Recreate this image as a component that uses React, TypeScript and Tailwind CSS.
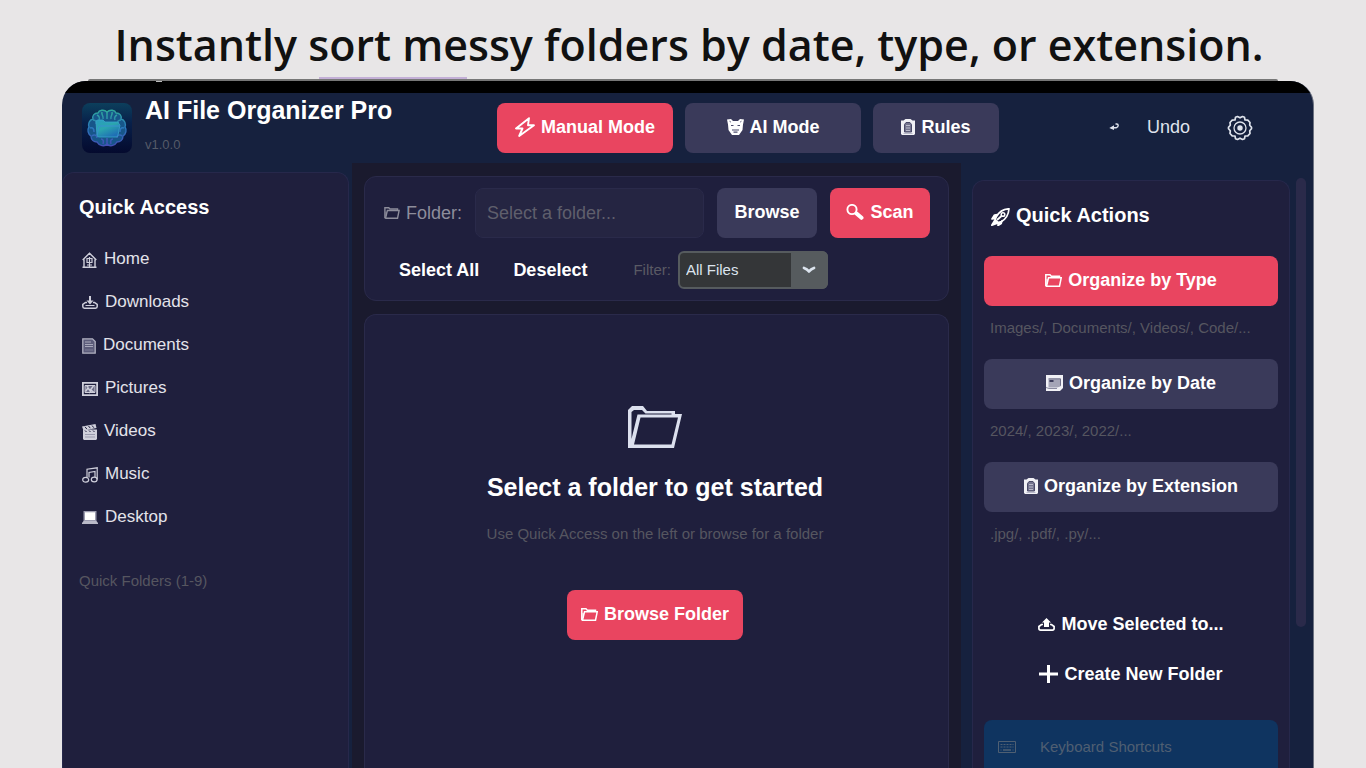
import React from "react";

type IconProps = { className?: string };

const svgBase = {
  fill: "none",
  stroke: "currentColor",
  "aria-hidden": true,
} as const;

const LogoIcon = () => (
  <svg viewBox="0 0 50 50" className="size-[50px] shrink-0" aria-hidden="true">
    <defs>
      <linearGradient id="logoBg" x1="0" y1="0" x2="0" y2="1">
        <stop offset="0" stopColor="#0c3f5c" />
        <stop offset="0.4" stopColor="#08204a" />
        <stop offset="1" stopColor="#040a2e" />
      </linearGradient>
      <linearGradient id="logoBrain" x1="0" y1="0" x2="0" y2="1">
        <stop offset="0" stopColor="#2fa79c" />
        <stop offset="0.5" stopColor="#2b78bd" />
        <stop offset="1" stopColor="#4350b4" />
      </linearGradient>
      <linearGradient id="logoFolder" x1="0" y1="0" x2="0.6" y2="1">
        <stop offset="0" stopColor="#2a9cc0" />
        <stop offset="0.5" stopColor="#2ba6ae" />
        <stop offset="1" stopColor="#1f6fb5" />
      </linearGradient>
    </defs>
    <rect width="50" height="50" rx="8" fill="url(#logoBg)" />
    <path
      d="M25 9c-3-3-8-2-9 1-4 0-6 3-5 6-4 1-5 5-4 8-2 3-1 7 2 9 0 4 3 6 6 6 2 4 8 5 10 2 2 3 8 2 10-2 3 0 6-2 6-6 3-2 4-6 2-9 1-3 0-7-4-8 1-3-1-6-5-6-1-3-6-4-9-1z"
      fill="#17568a"
      stroke="url(#logoBrain)"
      strokeWidth="1.4"
    />
    <path
      d="M25 9v7M20 9c-1 3 2 4 1 7M15 12c2 1 3 3 2 5M30 9c1 3-2 4-1 7M35 12c-2 1-3 3-2 5M11 17c3 0 4 2 3 4M39 17c-3 0-4 2-3 4M8 25c3-1 4 1 4 4M42 25c-3-1-4 1-4 4M10 33c2-2 5-1 5 2M40 33c-2-2-5-1-5 2M25 35v6M19 36c2 0 3 2 2 5M31 36c-2 0-3 2-2 5"
      fill="none"
      stroke="url(#logoBrain)"
      strokeWidth="1.5"
    />
    <path
      d="M14 19q0-2 2-2h5l2 2h12q2 0 2 2l1 1-2 10q0 2-2 2H17q-2 0-2-2z"
      fill="url(#logoFolder)"
      stroke="#39a6c9"
      strokeWidth="0.8"
    />
    <path d="M15 32l2-8q.3-1 1.300-1H38" fill="none" stroke="#3a8fd0" strokeWidth="1" />
  </svg>
);

const BoltIcon = () => (
  <svg viewBox="0 0 20 20" className="size-5" {...svgBase} strokeWidth="1.9" strokeLinejoin="round">
    <path d="M14 1.200 1 11.500h6.500L4.200 19 19 8.200h-6z" />
  </svg>
);

const RobotIcon = () => (
  <svg viewBox="0 0 17 16" className="h-4 w-[17px]" fill="currentColor" aria-hidden="true">
    <path d="M0 .5 4 0l2 2h5l2-2 4 .5-1 5-.5 5.500L12 16H5l-3.500-5L1 5.500z" />
    <path d="M4 6.500h2.500M13 6.500h-2.500M5 11h7M6.500 13.200h4" stroke="#4b4b6c" strokeWidth="1.200" fill="none" />
    <path d="M2.500 2.200 4 3.200M14.500 2.200 13 3.200" stroke="#6d6d88" strokeWidth="1" />
  </svg>
);

const ClipboardIcon = () => (
  <svg viewBox="0 0 14 16" className="h-4 w-3.5" aria-hidden="true">
    <path d="M0 1.500h2.500L4.500 0h5l2 1.500H14V15l-1 1H1l-1-1z" fill="#f1f1f6" />
    <path d="M3.500 13V5.500L5 3.500h4l1.500 2V13z" fill="#74748f" stroke="#4a4a69" strokeWidth="1" />
    <path d="M5 6.500h4M5 9h4M5 11.500h4" stroke="#b9b9ca" strokeWidth="1" />
    <path d="M2.500 14.500h9" stroke="#b9b9ca" strokeWidth="1" />
  </svg>
);

const UndoIcon = () => (
  <svg viewBox="0 0 10 8" className="h-2 w-2.5" {...svgBase} strokeWidth="1.4">
    <path d="M6.500 1h1.200Q9.200 1 9.200 2.500T7 4.800H2" />
    <path d="M5 2.200.3 5l4.700 2z" fill="currentColor" stroke="none" />
  </svg>
);

const GearIcon = () => (
  <svg viewBox="0 0 26 26" className="size-[26px]" {...svgBase} strokeWidth="1.700" strokeLinejoin="round">
    <path d="M10.500 1.500 13 2.800l2.500-1.300 2 .8.500 2.700 2.800.2L23 7.500l-.3 2.700 1.800 2v1.600l-1.800 2 .3 2.700-2.200 2.300-2.800.2-.5 2.700-2 .8-2.500-1.300-2.500 1.300-2-.8L8 21l-2.800-.2L3 18.500l.3-2.700-1.800-2v-1.600l1.800-2L3 7.500 5.200 5.200 8 5l.5-2.700z" />
    <circle cx="13" cy="13" r="6" strokeWidth="1.300" />
    <circle cx="13" cy="13" r="2.700" fill="currentColor" stroke="none" />
  </svg>
);

const HomeIcon = () => (
  <svg viewBox="0 0 15 16" className="h-4 w-[15px]" {...svgBase} strokeWidth="1.400">
    <path d="M.7 8 7.500 1.200 14.300 8M2 7.500v7.700M13 7.500v7.700M.5 15.200h14" />
    <path d="M5 6.500h5v4H5zM7.500 5v10M5 13h5" strokeWidth="1.200" />
  </svg>
);

const DownloadIcon = () => (
  <svg viewBox="0 0 16 13" className="h-[13px] w-4" {...svgBase} strokeWidth="1.500">
    <path d="M5 6.500H3.500L.8 8.500v2q0 1.700 1.700 1.700h11q1.700 0 1.700-1.700v-2l-2.700-2H11" />
    <path d="M3.500 9.500h9" strokeWidth="1" />
    <path d="M7 0h2v4.500h2.500L8 8.500 4.500 4.500H7z" fill="currentColor" stroke="none" />
  </svg>
);

const UploadIcon = () => (
  <svg viewBox="0 0 17 13" className="h-[13px] w-[17px]" {...svgBase} strokeWidth="1.700">
    <path d="M5 6.500H3.500L.9 8.500v2q0 1.600 1.700 1.600h11.800q1.700 0 1.700-1.600v-2l-2.600-2H12" />
    <path d="M8.500 0 13 4.500h-2V9H6V4.500H4z" fill="currentColor" stroke="none" />
  </svg>
);

const DocumentIcon = () => (
  <svg viewBox="0 0 14 16" className="h-4 w-3.5" {...svgBase} strokeWidth="1.300">
    <path d="M.8.8h9.700l2.700 2.700v11.700H.8z" fill="#5c5c7a" stroke="#b0b0c0" />
    <path d="M3 4h6M3 6.500h8M3 8.500h8" stroke="#a7a7ba" strokeWidth="1.200" />
    <path d="M3 12h8" stroke="#7d7d96" strokeWidth="1" />
  </svg>
);

const PictureIcon = () => (
  <svg viewBox="0 0 16 14" className="h-3.5 w-4" {...svgBase} strokeWidth="1.800">
    <path d="M.9.900h14.200v12.200H.9z" />
    <path d="M3 3.500h10v7H3z" strokeWidth="1" fill="#6a6a86" />
    <path d="M3.500 9.500 6 6l2 2.500L11.500 4M7 11l2.500-2.500L12 10.500M4.500 4.500h2" strokeWidth="1.400" />
  </svg>
);

const VideoIcon = () => (
  <svg viewBox="0 0 15 16" className="h-4 w-[15px]" fill="currentColor" aria-hidden="true">
    <path d="M0 2.500 13.500 0l1 4L1.500 6.500z" />
    <path d="M1 5.500h14V15l-1 1H2l-1-1z" />
    <path d="M3 2.800 4.800 5M6.500 2l1.800 2.200M10 1.500l1.800 2.200M3 6.500l1.500 1.500M7 6.500 8.500 8M11 6.500 12.500 8" stroke="#1f1f3d" strokeWidth="1" />
    <path d="M3 10.500h10M3 13h10" stroke="#9a9aae" strokeWidth="1" />
  </svg>
);

const MusicIcon = () => (
  <svg viewBox="0 0 16 16" className="size-4" {...svgBase} strokeWidth="1.200">
    <path d="M5 11V2.200L15.200.800v11.700M7 10.500V5.500l6-1V10" />
    <ellipse cx="3.700" cy="12.800" rx="3" ry="2.400" />
    <ellipse cx="12.200" cy="12.500" rx="2.900" ry="2.400" />
  </svg>
);

const LaptopIcon = () => (
  <svg viewBox="0 0 16 13" className="h-[13px] w-4" aria-hidden="true">
    <path d="M1.500 0h13v10h-13z" fill="#9c9cb0" />
    <path d="M3 1.300h10v7.700H3z" fill="#fff" />
    <path d="M1.500 10h13L16 12v1H0v-1z" fill="#b9b9c8" />
  </svg>
);

const FolderIcon = ({ className }: IconProps) => (
  <svg viewBox="0 0 54 42" className={className} fill="currentColor" fillRule="evenodd" aria-hidden="true">
    <path d="M0 42V4l4-4h11l4 5h28v3h7l-8 34zM3.500 33 9.500 8.500H43.500V7.500H17.500L14 4H6L3.500 6zM6 38.500H43.500L50 11.500H12.500z" />
  </svg>
);

const SmallFolderIcon = ({ className = "h-[13px] w-[17px]" }: IconProps) => (
  <svg viewBox="0 0 17 13" className={className} {...svgBase} strokeWidth="1.500">
    <path d="M.8 12.200V.8h4.200l1.300 1.400h8.200v1.500" />
    <path d="M1.500 12 3.500 3.800h12.700l-1.700 8.400H.8" />
    <path d="M2 5v5" strokeWidth="1" />
  </svg>
);

const SearchIcon = () => (
  <svg viewBox="0 0 18 16" className="h-4 w-[18px]" {...svgBase}>
    <circle cx="6" cy="5.500" r="4.600" strokeWidth="1.900" />
    <path d="m10.500 9.500 5 4.300" strokeWidth="4" strokeLinecap="round" />
  </svg>
);

const RocketIcon = () => (
  <svg viewBox="0 0 19 18" className="h-[18px] w-[19px]" {...svgBase} strokeWidth="1.700" strokeLinejoin="round">
    <path d="M18 .8C12 1 8 4 5.500 8.500L4 12l3 2.500 3.500-1C15 11 17.500 7 18 .800z" />
    <path d="M6.500 6.500 3.500 7 1 11l3.500-.5M11 12.500l-.8 3L7 17.500l.3-3" fill="currentColor" />
    <path d="M4 12 .8 17.200 7 15z" fill="currentColor" />
    <circle cx="12" cy="6.500" r="1.800" strokeWidth="1.500" />
    <path d="m6 12 4.500-4" strokeWidth="1.800" />
  </svg>
);

const CalendarIcon = () => (
  <svg viewBox="0 0 17 16" className="h-4 w-[17px]" aria-hidden="true">
    <path d="M0 0h17v13l-3 3H0z" fill="#f1f1f6" />
    <path d="M2.500 4h12v7.500L11 12.500H2.500z" fill="#a4a4b6" />
    <path d="M3.500 6h4" stroke="#3d3d5c" strokeWidth="2" />
    <path d="M2.500 3.800h12v7" stroke="#6c6c86" strokeWidth="1" fill="none" />
    <path d="M0 12.500 3 13.500h8" stroke="#8a8aa0" strokeWidth="1" fill="none" />
  </svg>
);

const PlusIcon = () => (
  <svg viewBox="0 0 19 18" className="h-[18px] w-[19px]" {...svgBase} strokeWidth="3">
    <path d="M9.500 0v18M0 9h19" />
  </svg>
);

const KeyboardIcon = () => (
  <svg viewBox="0 0 18 12" className="h-3 w-[18px]" {...svgBase} strokeWidth="1">
    <path d="M.5.500h17v11H.5z" />
    <path d="M2.500 3.500h13M2.500 6h13" strokeDasharray="2 1" />
    <path d="M5 9h8" strokeWidth="1.500" />
    <path d="M2.500 9h1M14.500 9h1" />
  </svg>
);

const ChevronIcon = () => (
  <svg viewBox="0 0 14 8" className="h-2 w-3.5" {...svgBase} strokeWidth="2.800" strokeLinecap="round" strokeLinejoin="round">
    <path d="M2 2q3 1 5 3.500Q9 3 12 2" />
  </svg>
);

type ActionButtonProps = {
  icon?: React.ReactNode;
  label: string;
  tone: "primary" | "muted" | "ghost";
  className?: string;
};

const tones = {
  primary: "bg-[#e94560]",
  muted: "bg-[#3a3a5a]",
  ghost: "bg-transparent",
};

const ActionButton = ({ icon, label, tone, className = "" }: ActionButtonProps) => (
  <button
    type="button"
    className={`flex h-[50px] items-center justify-center gap-1.5 rounded-lg pb-0.5 text-[18px] leading-6 font-bold whitespace-nowrap text-white ${tones[tone]} ${className}`}
  >
    {icon}
    <span>{label}</span>
  </button>
);

const places = [
  { label: "Home", icon: <HomeIcon /> },
  { label: "Downloads", icon: <DownloadIcon /> },
  { label: "Documents", icon: <DocumentIcon /> },
  { label: "Pictures", icon: <PictureIcon /> },
  { label: "Videos", icon: <VideoIcon /> },
  { label: "Music", icon: <MusicIcon /> },
  { label: "Desktop", icon: <LaptopIcon /> },
];

const organizers = [
  { label: "Organize by Type", hint: "Images/, Documents/, Videos/, Code/...", tone: "primary", icon: <SmallFolderIcon /> },
  { label: "Organize by Date", hint: "2024/, 2023/, 2022/...", tone: "muted", icon: <CalendarIcon /> },
  { label: "Organize by Extension", hint: ".jpg/, .pdf/, .py/...", tone: "muted", icon: <ClipboardIcon /> },
] as const;

const Header = () => (
  <header className="flex h-[70px] shrink-0 items-center pr-[60px] pl-5">
    <div className="flex w-[415px] shrink-0 items-center gap-[13px]">
      <LogoIcon />
      <div className="whitespace-nowrap">
        <h2 className="text-[25px] leading-[34px] font-bold text-white">AI File Organizer Pro</h2>
        <p className="text-[13px] leading-9 text-[#555a68]">v1.0.0</p>
      </div>
    </div>
    <nav className="flex gap-3">
      <ActionButton tone="primary" icon={<BoltIcon />} label="Manual Mode" className="w-44" />
      <ActionButton tone="muted" icon={<RobotIcon />} label="AI Mode" className="w-44" />
      <ActionButton tone="muted" icon={<ClipboardIcon />} label="Rules" className="w-[126px]" />
    </nav>
    <div className="ml-auto flex items-center gap-[37px] text-[#dfe3ec]">
      <button type="button" className="flex items-center gap-7 pb-0.5 text-[18px] leading-6">
        <UndoIcon />
        Undo
      </button>
      <button type="button" aria-label="Settings">
        <GearIcon />
      </button>
    </div>
  </header>
);

const Sidebar = () => (
  <aside className="mt-[9px] mr-[3px] w-[287px] shrink-0 rounded-t-xl border border-b-0 border-[#26284b] bg-[#1f1f3d] px-4">
    <h3 className="mt-[22px] text-[20px] leading-6 font-bold text-white">Quick Access</h3>
    <ul className="mt-[18px]">
      {places.map((place) => (
        <li key={place.label}>
          <a href="#" className="flex h-[43px] items-center gap-[7px] pl-[3px] text-[17px] text-[#e3e3ea]">
            <span className="pt-0.5 text-[#cfcfdb]">{place.icon}</span>
            {place.label}
          </a>
        </li>
      ))}
    </ul>
    <p className="mt-[31px] text-[15px] leading-6 text-[#565660]">Quick Folders (1-9)</p>
  </aside>
);

const Toolbar = () => (
  <section className="rounded-xl border border-[#2a2a4a] bg-[#1f1f3d] py-[11px] pr-[18px] pl-[17px]">
    <div className="flex items-center gap-[13px]">
      <label htmlFor="folder" className="flex items-center gap-1.5 pl-0.5 text-[18px] text-[#8d8d9b]">
        <SmallFolderIcon className="h-3 w-4" />
        Folder:
      </label>
      <input
        id="folder"
        type="text"
        placeholder="Select a folder..."
        className="h-[50px] min-w-0 flex-1 rounded-lg border border-[#2a2a4a] bg-[#252542] px-[11px] text-[18px] text-white placeholder:text-[#5f5f6c]"
      />
      <ActionButton tone="muted" label="Browse" className="w-[100px]" />
      <ActionButton tone="primary" icon={<SearchIcon />} label="Scan" className="w-[100px]" />
    </div>
    <div className="mt-[13px] flex h-[38px] items-center pl-[17px] text-[15px]">
      <button type="button" className="text-[18px] font-bold text-white">
        Select All
      </button>
      <button type="button" className="ml-[34px] text-[18px] font-bold text-white">
        Deselect
      </button>
      <label htmlFor="filter" className="ml-[46px] text-[#5a5a64]">
        Filter:
      </label>
      <div className="relative ml-[7px]">
        <select
          id="filter"
          className="h-[38px] w-[150px] appearance-none rounded-md border-2 border-[#565b5e] bg-[#343638] pl-1.5 text-[#dce4ee]"
        >
          <option>All Files</option>
        </select>
        <span className="pointer-events-none absolute inset-y-0 right-0 flex w-[37px] items-center justify-center rounded-r-md bg-[#565b5e] text-[#dce4ee]">
          <ChevronIcon />
        </span>
      </div>
    </div>
  </section>
);

const EmptyState = () => (
  <section className="flex flex-1 flex-col items-center rounded-t-xl border border-b-0 border-[#2a2a4a] bg-[#1f1f3d] pt-[91px] pr-[3px]">
    <FolderIcon className="h-[42px] w-[54px] text-[#dce0ee]" />
    <h3 className="mt-[23px] text-[25px] leading-8 font-bold text-white">Select a folder to get started</h3>
    <p className="mt-[19px] text-[15px] leading-6 text-[#565660]">Use Quick Access on the left or browse for a folder</p>
    <ActionButton tone="primary" icon={<SmallFolderIcon />} label="Browse Folder" className="mt-11 w-44" />
  </section>
);

const QuickActions = () => (
  <aside className="flex w-[352px] shrink-0 gap-1.5 pr-[7px] pl-[11px]">
    <div className="mt-[17px] flex-1 rounded-t-xl border border-b-0 border-[#26284b] bg-[#1f1f3d] px-[11px]">
      <h3 className="mt-[22px] flex items-center gap-1.5 pl-[7px] text-[20px] leading-6 font-bold text-white">
        <span className="pt-1">
          <RocketIcon />
        </span>
        Quick Actions
      </h3>
      <div className="mt-[29px] flex flex-col gap-[10px]">
        {organizers.map((item) => (
          <div key={item.label}>
            <ActionButton tone={item.tone} icon={item.icon} label={item.label} className="w-full" />
            <p className="pl-1.5 text-[15px] leading-[43px] text-[#565660]">{item.hint}</p>
          </div>
        ))}
      </div>
      <div className="mt-[45px]">
        <ActionButton tone="ghost" icon={<UploadIcon />} label="Move Selected to..." className="w-full" />
        <ActionButton tone="ghost" icon={<PlusIcon />} label="Create New Folder" className="w-full" />
      </div>
      <div className="mt-5 flex h-40 gap-6 rounded-lg bg-[#0f3460] px-3.5 pt-[15px] text-[15px] leading-6 text-[#4f5f72]">
        <span className="pt-1.5">
          <KeyboardIcon />
        </span>
        Keyboard Shortcuts
      </div>
    </div>
    <div className="mt-[15px] h-[449px] w-2.5 rounded-md bg-[#2a2a4a]" />
  </aside>
);

export default function App() {
  return (
    <div className="relative flex h-screen flex-col overflow-hidden bg-[#e8e6e7] font-['Liberation_Sans',sans-serif]">
      <h1 className="h-[77px] shrink-0 pt-1 pl-3 text-center font-['Open_Sans',sans-serif] text-[43px] leading-[82px] font-semibold whitespace-nowrap text-[#111111]">
        Instantly sort messy folders by date, type, or extension.
      </h1>
      <div className="ml-[319px] h-0.5 w-[148px] shrink-0 bg-[#c3afd6]" />
      <div className="mr-[88px] ml-[88px] h-0.5 shrink-0 rounded-t-full bg-[#777777]" />
      <div className="mr-[52px] ml-[62px] flex min-h-0 flex-1 flex-col overflow-hidden rounded-t-[24px] border-r border-[#6c7280] bg-[#16213e]">
        <div className="h-3 shrink-0 bg-black pl-[94px]">
          <div className="h-px w-1.5 bg-[#bbbbbb]" />
        </div>
        <Header />
        <div className="flex min-h-0 flex-1">
          <Sidebar />
          <main className="flex min-w-0 flex-1 flex-col gap-[13px] bg-[#1a1a2e] px-3 pt-[13px]">
            <Toolbar />
            <EmptyState />
          </main>
          <QuickActions />
        </div>
      </div>
    </div>
  );
}
